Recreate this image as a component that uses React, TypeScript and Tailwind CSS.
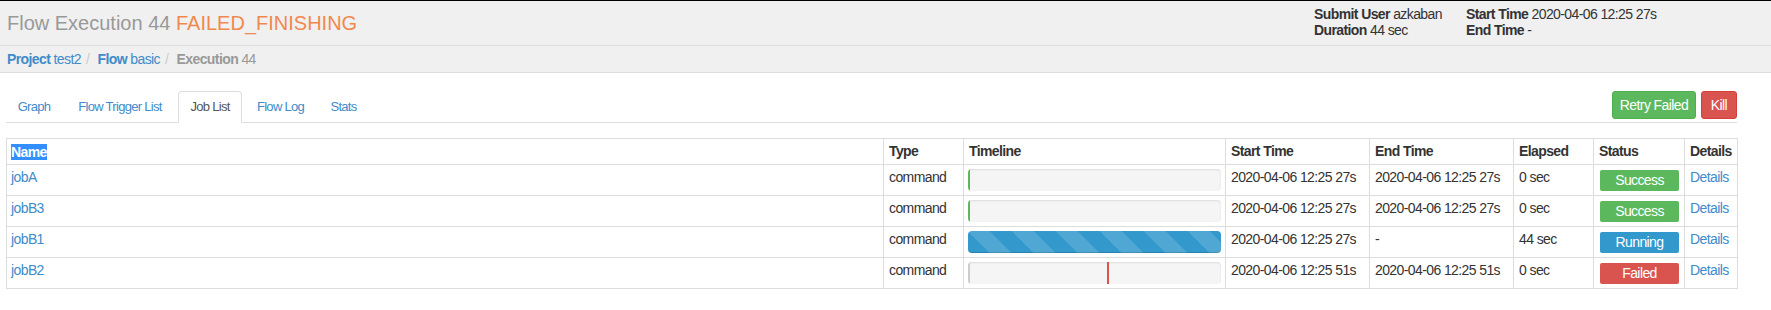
import React from "react";

type Job = {
  name: string;
  start: string;
  end: string;
  elapsed: string;
  status: "Success" | "Running" | "Failed";
};

const jobs: Job[] = [
  { name: "jobA", start: "2020-04-06 12:25 27s", end: "2020-04-06 12:25 27s", elapsed: "0 sec", status: "Success" },
  { name: "jobB3", start: "2020-04-06 12:25 27s", end: "2020-04-06 12:25 27s", elapsed: "0 sec", status: "Success" },
  { name: "jobB1", start: "2020-04-06 12:25 27s", end: "-", elapsed: "44 sec", status: "Running" },
  { name: "jobB2", start: "2020-04-06 12:25 51s", end: "2020-04-06 12:25 51s", elapsed: "0 sec", status: "Failed" },
];

const statusColor = {
  Success: "bg-[#5cb85c]",
  Running: "bg-[#3398cc]",
  Failed: "bg-[#d9534f]",
};

const tabs = [
  { label: "Graph", w: "w-[56px]" },
  { label: "Flow Trigger List", w: "w-[112px]" },
  { label: "Job List", w: "w-[64px]", active: true },
  { label: "Flow Log", w: "w-[73px]" },
  { label: "Stats", w: "w-[49px]" },
];

const Timeline = ({ status }: { status: Job["status"] }) => {
  if (status === "Running") {
    return (
      <div className="h-[22px] rounded-[4px] bg-[#3398cc] bg-[linear-gradient(45deg,rgba(255,255,255,0.15)_25%,transparent_25%,transparent_50%,rgba(255,255,255,0.15)_50%,rgba(255,255,255,0.15)_75%,transparent_75%,transparent)] bg-[length:44px_44px] shadow-[inset_0_-1px_0_rgba(0,0,0,0.15)]" />
    );
  }
  return (
    <div className="relative h-[22px] overflow-hidden rounded-[4px] bg-[#f5f5f5] shadow-[inset_0_1px_2px_rgba(0,0,0,0.1)]">
      {status === "Success" && <div className="absolute inset-y-0 left-0 w-[2px] bg-[#5cb85c]" />}
      {status === "Failed" && (
        <>
          <div className="absolute inset-y-0 left-0 w-[2px] bg-[#cccccc]" />
          <div className="absolute inset-y-0 left-[139px] w-[2px] bg-[#d9534f]" />
        </>
      )}
    </div>
  );
};

export default function App() {
  return (
    <div className="min-h-[310px] bg-white font-['Liberation_Sans',Arial,sans-serif] text-[14px] tracking-[-0.6px] text-[#333]">
      <div className="h-px bg-black" />

      {/* page header */}
      <div className="flex h-[45px] border-b border-[#ddd] bg-[#f0f0f0]">
        <h1 className="flex items-center pl-[7px] text-[20px] tracking-normal text-[#999]">
          Flow Execution 44&nbsp;<span className="text-[#f0894f]">FAILED_FINISHING</span>
        </h1>
        <div className="ml-auto flex pt-[5px] leading-[16px]">
          <div className="w-[152px]">
            <div>
              <b>Submit User</b> azkaban
            </div>
            <div>
              <b>Duration</b> 44 sec
            </div>
          </div>
          <div className="w-[305px]">
            <div>
              <b>Start Time</b> 2020-04-06 12:25 27s
            </div>
            <div>
              <b>End Time</b> -
            </div>
          </div>
        </div>
      </div>

      {/* breadcrumb */}
      <div className="flex h-[27px] items-center border-b border-[#ddd] bg-[#f0f0f0] pl-[7px]">
        <a className="text-[#428bca]">
          <b>Project</b> test2
        </a>
        <span className="px-[5px] text-[#ccc]">/&nbsp;</span>
        <a className="text-[#428bca]">
          <b>Flow</b> basic
        </a>
        <span className="px-[5px] text-[#ccc]">/&nbsp;</span>
        <span className="text-[#999]">
          <b>Execution</b> 44
        </span>
      </div>

      {/* tabs + actions */}
      <div className="ml-[6px] mr-[34px] mt-[18px] flex h-[32px] items-start border-b border-[#ddd]">
        <div className="flex gap-[2px]">
          {tabs.map((t) => (
            <div
              key={t.label}
              className={`flex h-[32px] items-center justify-center text-[13px] tracking-[-0.7px] ${t.w} ${
                t.active
                  ? "rounded-t-[4px] border border-[#ddd] border-b-white bg-white text-[#555]"
                  : "text-[#428bca]"
              }`}
            >
              {t.label}
            </div>
          ))}
        </div>
        <div className="ml-auto flex gap-[5px]">
          <button className="h-[28px] w-[84px] rounded-[3px] border border-[#4cae4c] bg-[#5cb85c] text-white">
            Retry Failed
          </button>
          <button className="h-[28px] w-[36px] rounded-[3px] border border-[#d43f3a] bg-[#d9534f] text-white">
            Kill
          </button>
        </div>
      </div>

      {/* job table */}
      <div className="ml-[6px] mt-[15px] w-[1732px] border-l border-t border-[#ddd]">
        <div className="flex h-[26px] items-center border-b border-[#ddd] font-bold">
          <div className="flex h-full w-[877px] items-center border-r border-[#ddd] pl-[4px]">
            <span className="bg-[#338fff] leading-[16px] text-white">Name</span>
          </div>
          <div className="flex h-full w-[80px] items-center border-r border-[#ddd] px-[5px]">Type</div>
          <div className="flex h-full w-[262px] items-center border-r border-[#ddd] px-[5px]">Timeline</div>
          <div className="flex h-full w-[144px] items-center border-r border-[#ddd] px-[5px]">Start Time</div>
          <div className="flex h-full w-[144px] items-center border-r border-[#ddd] px-[5px]">End Time</div>
          <div className="flex h-full w-[80px] items-center border-r border-[#ddd] px-[5px]">Elapsed</div>
          <div className="flex h-full w-[91px] items-center border-r border-[#ddd] px-[5px]">Status</div>
          <div className="flex h-full w-[53px] items-center border-r border-[#ddd] px-[5px]">Details</div>
        </div>
        {jobs.map((job) => (
          <div key={job.name} className="flex h-[31px] border-b border-[#ddd] leading-[20px]">
            <div className="w-[877px] border-r border-[#ddd] pl-[4px] pt-[2px] text-[#428bca]">{job.name}</div>
            <div className="w-[80px] border-r border-[#ddd] px-[5px] pt-[2px]">command</div>
            <div className="w-[262px] border-r border-[#ddd] px-[4px] pt-[4px]">
              <Timeline status={job.status} />
            </div>
            <div className="w-[144px] border-r border-[#ddd] px-[5px] pt-[2px]">{job.start}</div>
            <div className="w-[144px] border-r border-[#ddd] px-[5px] pt-[2px]">{job.end}</div>
            <div className="w-[80px] border-r border-[#ddd] px-[5px] pt-[2px]">{job.elapsed}</div>
            <div className="w-[91px] border-r border-[#ddd] pl-[6px] pr-[5px] pt-[5px]">
              <div className={`h-[21px] rounded-[2px] text-center leading-[21px] text-white ${statusColor[job.status]}`}>
                {job.status}
              </div>
            </div>
            <div className="w-[53px] border-r border-[#ddd] px-[5px] pt-[2px] text-[#428bca]">Details</div>
          </div>
        ))}
      </div>
    </div>
  );
}
